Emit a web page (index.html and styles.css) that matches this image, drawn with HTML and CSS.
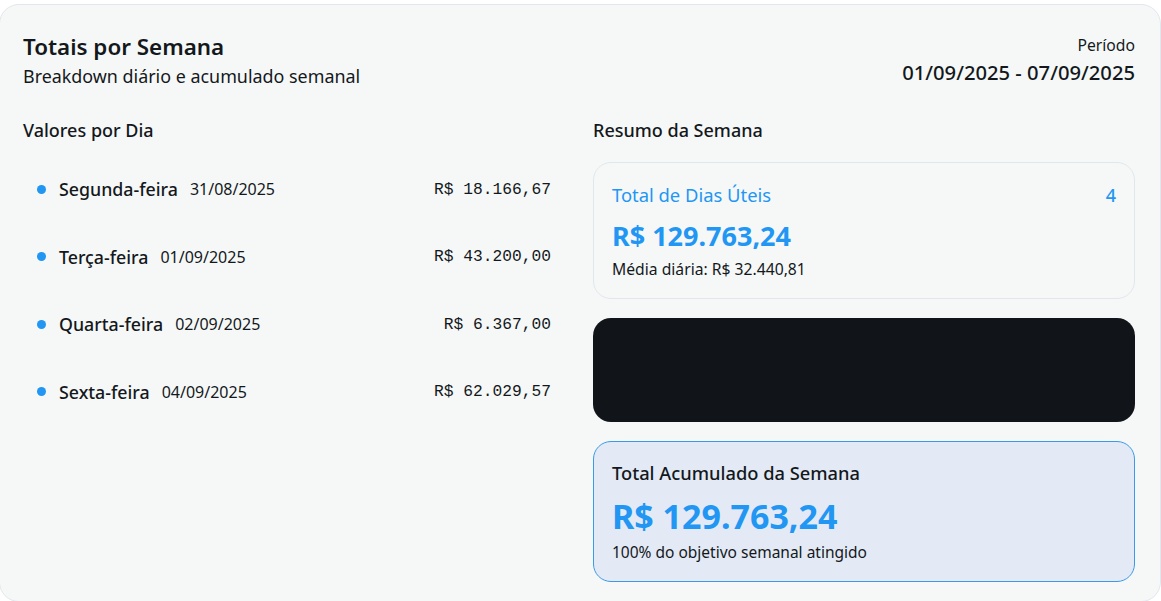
FILE: index.html
```html
<!DOCTYPE html>
<html lang="pt-BR">
<head>
<meta charset="utf-8">
<title>Totais por Semana</title>
<link rel="stylesheet" href="styles.css">
</head>
<body>
<div class="page">
  <section class="card">
    <header class="head">
      <div class="head-left">
        <h1 class="title">Totais por Semana</h1>
        <p class="subtitle">Breakdown diário e acumulado semanal</p>
      </div>
      <div class="head-right">
        <div class="period-label">Período</div>
        <div class="period-value">01/09/2025 - 07/09/2025</div>
      </div>
    </header>
    <div class="cols">
      <div class="col">
        <h2 class="col-title">Valores por Dia</h2>
        <ul class="days">
          <li class="day"><span class="dot"></span><span class="day-name">Segunda-feira</span><span class="day-date">31/08/2025</span><span class="day-value">R$ 18.166,67</span></li>
          <li class="day"><span class="dot"></span><span class="day-name">Terça-feira</span><span class="day-date">01/09/2025</span><span class="day-value">R$ 43.200,00</span></li>
          <li class="day"><span class="dot"></span><span class="day-name">Quarta-feira</span><span class="day-date">02/09/2025</span><span class="day-value">R$ 6.367,00</span></li>
          <li class="day"><span class="dot"></span><span class="day-name">Sexta-feira</span><span class="day-date">04/09/2025</span><span class="day-value">R$ 62.029,57</span></li>
        </ul>
      </div>
      <div class="col">
        <h2 class="col-title">Resumo da Semana</h2>
        <div class="summary">
          <div class="box box-days">
            <div class="box-row"><span class="box-label blue">Total de Dias Úteis</span><span class="box-count">4</span></div>
            <div class="box-amount">R$ 129.763,24</div>
            <div class="box-note">Média diária: R$ 32.440,81</div>
          </div>
          <div class="box box-dark"></div>
          <div class="box box-total">
            <div class="box-label strong">Total Acumulado da Semana</div>
            <div class="box-amount big">R$ 129.763,24</div>
            <div class="box-note">100% do objetivo semanal atingido</div>
          </div>
        </div>
      </div>
    </div>
  </section>
</div>
</body>
</html>
```

FILE: styles.css
```css
* { box-sizing: border-box; }
html, body { margin: 0; padding: 0; background: #ffffff; }
body {
  font-family: "Noto Sans", "Open Sans", sans-serif;
  color: #14181c;
  overflow: hidden;
}
.page { padding-top: 4px; }
.card {
  margin-left: -1px;
  width: 1162px;
  height: 598px;
  background: #f6f8f8;
  border: 1px solid #e2e7ed;
  border-radius: 20px;
  padding: 26px 25px 24px 23px;
}
.head {
  display: flex;
  justify-content: space-between;
  align-items: flex-start;
}
.title {
  margin: 0;
  font-size: 22.4px;
  line-height: 32px;
  font-weight: 600;
}
.subtitle {
  margin: 0;
  font-size: 17.9px;
  line-height: 26px;
}
.head-right { text-align: right; padding-top: 3px; }
.period-label { font-size: 15.7px; line-height: 22px; }
.period-value { font-size: 20.2px; line-height: 28px; font-weight: 500; margin-top: 2px; }

.cols {
  display: grid;
  grid-template-columns: 1fr 1fr;
  gap: 28px;
  margin-top: 28px;
}
.col-title {
  margin: 0;
  font-size: 18px;
  line-height: 26px;
  font-weight: 500;
}
.days {
  list-style: none;
  margin: 24px 0 0 0;
  padding: 0;
  display: flex;
  flex-direction: column;
  gap: 23.5px;
}
.day {
  display: flex;
  align-items: center;
  height: 44px;
  padding: 0 14px;
}
.dot {
  width: 9px;
  height: 9px;
  border-radius: 50%;
  background: #2196f3;
  margin-right: 13px;
  flex: none;
}
.day-name { font-size: 17.8px; font-weight: 500; margin-right: 12px; }
.day-date { font-size: 16px; }
.day-value {
  margin-left: auto;
  font-family: "Liberation Mono", monospace;
  font-size: 16.25px;
}

.summary {
  display: flex;
  flex-direction: column;
  gap: 19px;
  margin-top: 19px;
}
.box {
  border-radius: 18px;
  padding: 19px 18px 0 18px;
}
.box-days {
  border: 1px solid #e2e7ed;
  height: 137px;
}
.box-row { display: flex; justify-content: space-between; align-items: center; }
.box-label { font-size: 18.4px; line-height: 26px; }
.blue { color: #2196f3; }
.box-count { color: #2196f3; font-size: 18px; font-weight: 500; }
.box-amount {
  color: #2196f3;
  font-size: 27px;
  line-height: 36px;
  font-weight: 700;
  margin-top: 10px;
}
.box-note { font-size: 15.7px; line-height: 24px; margin-top: 3px; }
.box-dark {
  background: #111418;
  height: 104px;
  padding: 0;
}
.box-total {
  background: #e3eaf5;
  border: 1px solid #3a9ae8;
  height: 141px;
  padding-top: 18px;
}
.box-total .box-label { font-size: 18.3px; }
.strong { font-weight: 500; }
.box-amount.big { font-size: 34px; line-height: 44px; margin-top: 8px; }
.box-total .box-note { margin-top: 2px; font-size: 15.5px; }
```
